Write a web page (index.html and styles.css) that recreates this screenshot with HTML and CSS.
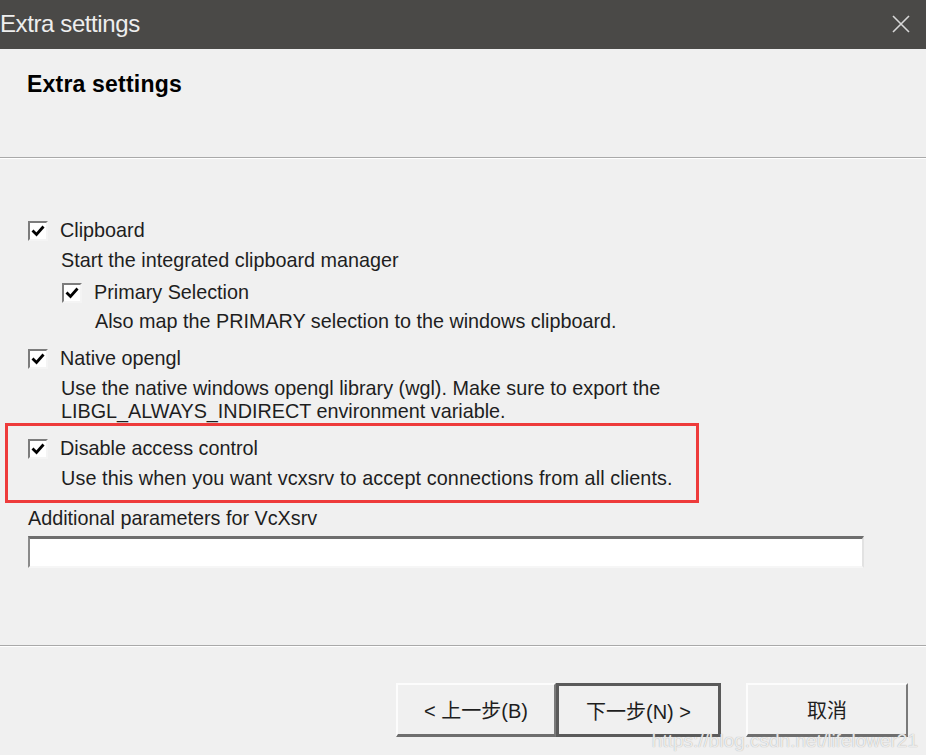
FILE: index.html
```html
<!DOCTYPE html>
<html lang="en">
<head>
  <meta charset="UTF-8">
  <title>Extra settings</title>
  <link rel="stylesheet" href="styles.css">
</head>
<body>
  <div class="window">

    <!-- Title bar -->
    <div class="titlebar">
      <span class="title">Extra settings</span>
      <svg class="close" width="20" height="20" viewBox="0 0 20 20">
        <path d="M2 2 L18 18 M18 2 L2 18" stroke="#d8d8d8" stroke-width="1.6" fill="none"/>
      </svg>
    </div>

    <!-- Wizard header -->
    <div class="header">
      <h2>Extra settings</h2>
    </div>
    <div class="sep"></div>

    <div class="content">

      <!-- Clipboard -->
      <div class="option">
        <div class="check-row">
          <span class="box"><svg width="16" height="16" viewBox="0 0 16 16"><path d="M2.5 7.5 L6.5 11.5 L13.5 3.5" stroke="#000" stroke-width="2.8" fill="none"/></svg></span>
          <span>Clipboard</span>
        </div>
        <div class="desc">Start the integrated clipboard manager</div>

        <div class="option sub">
          <div class="check-row">
            <span class="box"><svg width="16" height="16" viewBox="0 0 16 16"><path d="M2.5 7.5 L6.5 11.5 L13.5 3.5" stroke="#000" stroke-width="2.8" fill="none"/></svg></span>
            <span>Primary Selection</span>
          </div>
          <div class="desc tight">Also map the PRIMARY selection to the windows clipboard.</div>
        </div>
      </div>

      <!-- Native opengl -->
      <div class="option">
        <div class="check-row">
          <span class="box"><svg width="16" height="16" viewBox="0 0 16 16"><path d="M2.5 7.5 L6.5 11.5 L13.5 3.5" stroke="#000" stroke-width="2.8" fill="none"/></svg></span>
          <span>Native opengl</span>
        </div>
        <div class="desc">Use the native windows opengl library (wgl). Make sure to export the<br>LIBGL_ALWAYS_INDIRECT environment variable.</div>
      </div>

      <!-- Disable access control -->
      <div class="option marked">
        <div class="check-row">
          <span class="box"><svg width="16" height="16" viewBox="0 0 16 16"><path d="M2.5 7.5 L6.5 11.5 L13.5 3.5" stroke="#000" stroke-width="2.8" fill="none"/></svg></span>
          <span>Disable access control</span>
        </div>
        <div class="desc">Use this when you want vcxsrv to accept connections from all clients.</div>
      </div>

      <!-- Extra parameters -->
      <div class="params">
        <label>Additional parameters for VcXsrv</label>
        <input type="text" class="param-input">
      </div>

    </div>
    <div class="sep"></div>

    <!-- Wizard buttons -->
    <div class="footer">
      <button class="btn">&lt; 上一步(B)</button>
      <button class="btn default">下一步(N) &gt;</button>
      <button class="btn cancel">取消</button>
    </div>

    <div class="watermark">https://blog.csdn.net/lifelower21</div>
  </div>
</body>
</html>
```

FILE: styles.css
```css
* {
  box-sizing: border-box;
}

body {
  margin: 0;
  padding: 0;
  background-color: #f0f0f0;
  font-family: "Liberation Sans", Arial, sans-serif;
  color: #1e1e1e;
  overflow: hidden;
}

.window {
  position: relative;
  width: 926px;
  height: 755px;
  overflow: hidden;
}

.titlebar {
  height: 49px;
  background-color: #4a4947;
  display: flex;
  align-items: center;
  justify-content: space-between;
  padding: 0 15px 2px 0;
}

.title {
  color: #eeeeee;
  font-size: 24px;
  letter-spacing: -0.4px;
}

.close {
  margin-top: 1px;
}

.header {
  height: 108px;
  padding: 21px 0 0 27px;
}

.header h2 {
  margin: 0;
  font-size: 23px;
  line-height: 28px;
  font-weight: bold;
  color: #000;
  letter-spacing: 0.2px;
}

.sep {
  height: 2px;
  border-top: 1px solid #a9a9a9;
  border-bottom: 1px solid #ffffff;
}

.content {
  height: 486px;
  padding: 60px 0 0 28px;
  font-size: 19.8px;
  line-height: 23px;
}

.option {
  margin-top: 14px;
}

.option:first-child {
  margin-top: 0;
}

.option.sub {
  margin: 9px 0 0 34px;
}

.check-row {
  display: flex;
  align-items: center;
  gap: 12px;
  height: 23px;
}

.box {
  width: 20px;
  height: 20px;
  border: 2px solid;
  border-color: #7c7c7c #f4f4f4 #f4f4f4 #7c7c7c;
  background-color: #fff;
  display: flex;
  align-items: center;
  justify-content: center;
}

.desc {
  margin: 7px 0 0 33px;
}

.desc.tight {
  margin-top: 6px;
}

/* red annotation frame around the option */
.marked {
  position: relative;
  width: fit-content;
}

.marked .desc {
  letter-spacing: 0.1px;
}

.marked::before {
  content: "";
  position: absolute;
  top: -14px;
  bottom: -13px;
  left: -23px;
  right: -26px;
  border: 3px solid #ee3b3b;
}

.params {
  margin-top: 17px;
}

.params label {
  display: block;
  height: 23px;
}

.param-input {
  display: block;
  width: 836px;
  height: 32px;
  margin-top: 6px;
  border-style: solid;
  border-width: 3px 2px 2px 2px;
  border-color: #6e6e6e #e2e2e2 #f6f6f6 #8a8a8a;
  background-color: #fff;
  outline: none;
}

.footer {
  height: 106px;
  display: flex;
  justify-content: flex-end;
  align-items: flex-start;
  padding: 36px 18px 0 0;
}

.btn {
  height: 54px;
  width: 160px;
  background-color: #f0f0f0;
  border: 2px solid;
  border-color: #fcfcfc #7a7a7a #6e6e6e #fcfcfc;
  border-bottom-width: 3px;
  font-family: "Liberation Sans", "Noto Sans CJK SC", sans-serif;
  font-size: 20px;
  color: #1e1e1e;
  padding: 0;
}

.btn.default {
  width: 165px;
  border: 3px solid #5a5a5a;
}

.btn.cancel {
  width: 162px;
  margin-left: 25px;
}

.watermark {
  position: absolute;
  right: 8px;
  bottom: 3px;
  font-size: 19px;
  color: rgba(255, 255, 255, 0.8);
  text-shadow: 0 0 1px #9a9a9a;
}
```
